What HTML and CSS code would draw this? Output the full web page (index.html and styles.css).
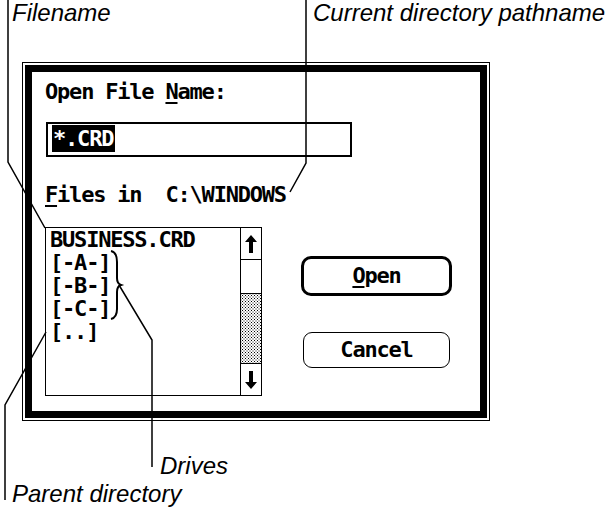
FILE: index.html
```html
<!DOCTYPE html>
<html>
<head>
    <title>Open File dialog</title>
    <link rel="stylesheet" href="styles.css">
</head>
<body>
    <div class="page">
        <div class="callouts-top">
            <span>Filename</span>
            <span>Current directory pathname</span>
        </div>

        <div class="dialog">
            <div class="frame">
                <div class="prompt">Open File <u>N</u>ame:</div>
                <div class="field"><span class="sel">*.CRD</span></div>
                <div class="dir"><u>F</u>iles in&nbsp;&nbsp;C:\WINDOWS</div>

                <div class="row">
                    <div class="list">
                        <ul class="files">
                            <li>BUSINESS.CRD</li>
                            <li>[-A-]</li>
                            <li>[-B-]</li>
                            <li>[-C-]</li>
                            <li>[..]</li>
                        </ul>
                        <div class="scroll">
                            <div class="arrow up">
                                <svg width="12" height="18" viewBox="0 0 12 18"><path d="M6 0 L12 7 H8 V18 H4 V7 H0 Z"/></svg>
                            </div>
                            <div class="thumb"></div>
                            <div class="track"></div>
                            <div class="arrow down">
                                <svg width="12" height="18" viewBox="0 0 12 18"><path d="M6 18 L12 11 H8 V0 H4 V11 H0 Z"/></svg>
                            </div>
                        </div>
                    </div>

                    <div class="actions">
                        <button class="btn default"><u>O</u>pen</button>
                        <button class="btn">Cancel</button>
                    </div>
                </div>
            </div>
        </div>

        <div class="callouts-bottom">
            <div class="drives">Drives</div>
            <div class="parent">Parent directory</div>
        </div>

        <!-- leader lines from the captions to the dialog -->
        <svg class="leaders" width="611" height="507" viewBox="0 0 611 507">
            <path d="M8 0 V162 L45 228"/>
            <path d="M306 0 V163 L290 192"/>
            <path class="brace" d="M111 251 C116 252 117 256 117 262 V278 C117 282 118 284 121 285 C118 286 117 288 117 292 V309 C117 315 115 318 111 319"/>
            <path d="M119 285 L152 340 V467"/>
            <path d="M46 332 L5 405 V500"/>
        </svg>
    </div>
</body>
</html>
```

FILE: styles.css
```css
body {
    margin: 0;
    background: #fff;
    color: #000;
    font-family: "Liberation Sans", Arial, sans-serif;
}

.page {
    position: relative;
    width: 611px;
    height: 507px;
    overflow: hidden;
}

.callouts-top {
    display: grid;
    grid-template-columns: 301px auto;
    padding-left: 12px;
    height: 62px;
    font-style: italic;
    font-size: 24px;
    line-height: 26px;
}

.dialog {
    margin-left: 22px;
    width: 468px;
    height: 359px;
    box-sizing: border-box;
    border: 1px solid #000;
    padding: 2px;
}

.frame {
    height: 100%;
    box-sizing: border-box;
    border: 7px solid #000;
    padding: 8px 0 0 13px;
    font-family: "DejaVu Sans Mono", monospace;
    font-weight: bold;
    font-size: 22px;
    letter-spacing: -1.2px;
    line-height: 24px;
}

u {
    text-decoration-thickness: 2px;
    text-underline-offset: 3px;
}

.field {
    margin: 18px 0 0 1px;
    width: 306px;
    height: 35px;
    box-sizing: border-box;
    border: 2px solid #000;
    padding: 1px 0 0 4px;
}

.sel {
    display: inline-block;
    height: 27px;
    line-height: 27px;
    padding: 0 2px 0 1px;
    background: #000;
    color: #fff;
}

.dir {
    margin-top: 26px;
}

.row {
    display: flex;
    margin-top: 20px;
}

.list {
    display: flex;
    width: 217px;
    height: 169px;
    box-sizing: border-box;
    border: 1px solid #000;
}

.files {
    flex: 1;
    list-style: none;
    margin: 0;
    padding: 0 0 0 4px;
    line-height: 23px;
}

.scroll {
    display: flex;
    flex-direction: column;
    width: 21px;
    box-sizing: border-box;
    border-left: 1px solid #000;
}

.arrow {
    display: flex;
    align-items: center;
    justify-content: center;
    height: 32px;
    box-sizing: border-box;
}

.arrow.up {
    border-bottom: 1px solid #000;
}

.arrow.down {
    border-top: 1px solid #000;
}

.thumb {
    height: 33px;
}

.track {
    flex: 1;
    border-top: 1px solid #000;
    background-color: #fff;
    background-image:
        radial-gradient(#000 20%, transparent 27%),
        radial-gradient(#000 20%, transparent 27%);
    background-size: 3px 3px;
    background-position: 0 0, 1.5px 1.5px;
}

.actions {
    display: flex;
    flex-direction: column;
    align-items: center;
    width: 151px;
    margin-left: 39px;
    padding-top: 29px;
}

.btn {
    width: 147px;
    height: 36px;
    box-sizing: border-box;
    border: 1.5px solid #000;
    border-radius: 9px;
    background: #fff;
    color: #000;
    padding: 0;
    font: inherit;
    letter-spacing: inherit;
    line-height: 24px;
}

.btn.default {
    width: 151px;
    height: 40px;
    border-width: 3px;
    border-radius: 10px;
    margin-bottom: 36px;
}

.callouts-bottom {
    font-style: italic;
    font-size: 24px;
    line-height: 26px;
}

.drives {
    margin-top: 32px;
    padding-left: 160px;
}

.parent {
    margin-top: 2px;
    padding-left: 12px;
}

.leaders {
    position: absolute;
    top: 0;
    left: 0;
    pointer-events: none;
}

.leaders path {
    fill: none;
    stroke: #000;
    stroke-width: 1.5;
}

.leaders .brace {
    stroke-width: 2;
}
```
